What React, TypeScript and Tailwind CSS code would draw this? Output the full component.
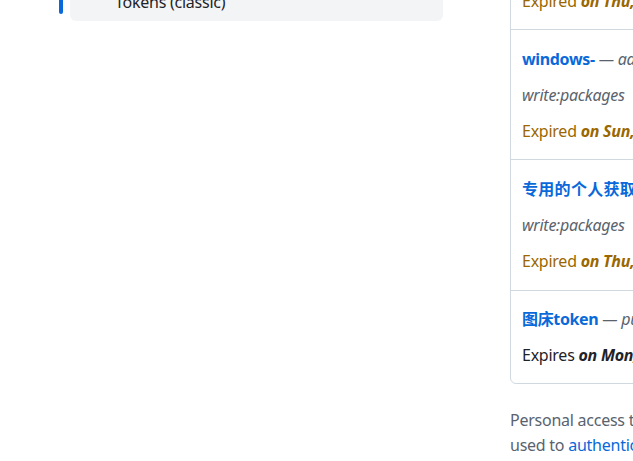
import React from "react";

const font = { fontFamily: '"Noto Sans", "Noto Sans CJK SC", sans-serif' };

function Row({
  title,
  scopeHead,
  scopes,
  status,
  when,
  expired,
  cls,
  cjk,
}: {
  title: string;
  scopeHead: string;
  scopes?: string;
  status: string;
  when: string;
  expired: boolean;
  cls: string;
  cjk?: boolean;
}) {
  return (
    <div className={"flex flex-col gap-3 pl-[11px] pr-4 " + cls}>
      <div className="h-6 leading-6 whitespace-nowrap">
        <a className={"font-bold text-[#0969da] " + (cjk ? "tracking-[0.3px]" : "tracking-[-0.35px]")}>{title}</a>
        <span className="italic text-[#59636e]"> — {scopeHead}</span>
      </div>
      {scopes && <div className="h-6 leading-6 whitespace-nowrap italic text-[#59636e]">{scopes}</div>}
      <div className={"h-6 leading-6 whitespace-nowrap " + (expired ? "text-[#9a6700]" : "text-[#1f2328]")}>
        {status} <span className="font-bold italic">{when}</span>
      </div>
    </div>
  );
}

export default function App() {
  return (
    <div
      className="w-[633px] h-[461px] overflow-hidden bg-white text-[16px] text-[#1f2328] tracking-[-0.25px]"
      style={font}
    >
      <div className="flex">
        <div className="ml-[60px] w-[383px] shrink-0">
          <div className="relative ml-[10px] mt-[-17px] rounded-md bg-[#f3f4f6] pl-[45px] py-[7px]">
            <span className="absolute left-[-11px] top-[10px] h-[21px] w-1 rounded-md bg-[#0969da]"></span>
            <div className="h-6 leading-6 whitespace-nowrap">Tokens (classic)</div>
          </div>
        </div>
        <div className="ml-[67px] w-[420px] shrink-0">
          <div className="mt-[-101px] rounded-md border border-[#d1d9e0]">
            <Row
              title="github-actions"
              scopeHead="admin:org, repo"
              scopes="write:packages"
              status="Expired"
              when="on Thu, Jan 4 2024."
              expired
              cls="pt-[17px] pb-4 border-b border-[#d1d9e0]"
            />
            <Row
              title="windows-"
              scopeHead="admin:org, delete:packages, repo,"
              scopes="write:packages"
              status="Expired"
              when="on Sun, Mar 10 2024."
              expired
              cls="pt-[17px] pb-4 border-b border-[#d1d9e0]"
            />
            <Row
              title="专用的个人获取"
              scopeHead="delete:packages, repo,"
              scopes="write:packages"
              status="Expired"
              when="on Thu, Jun 13 2024."
              expired
              cjk
              cls="pt-[17px] pb-[17px] border-b border-[#d1d9e0]"
            />
            <Row
              title="图床token"
              scopeHead="public_repo"
              status="Expires"
              when="on Mon, Dec 1 2025."
              expired={false}
              cls="pt-4 pb-4"
            />
          </div>
          <p className="mt-6 leading-[25px] text-[#59636e] whitespace-nowrap">
            Personal access tokens (classic) function like ordinary OAuth access tokens.
            <br />
            used to <a className="text-[#0969da]">authenticate to the API</a> over Basic Authentication.
          </p>
        </div>
      </div>
    </div>
  );
}
